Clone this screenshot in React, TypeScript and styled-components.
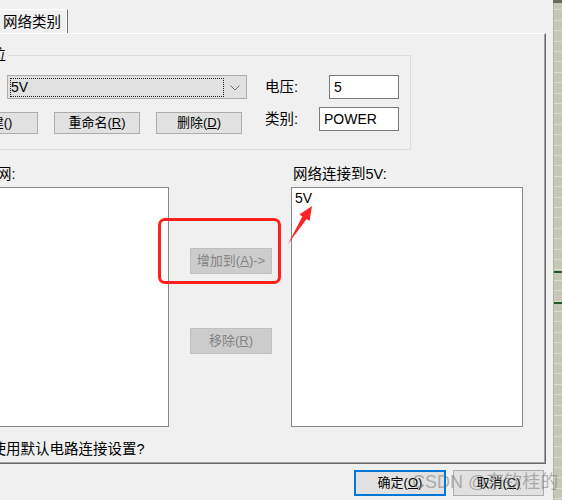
import styled, { createGlobalStyle } from 'styled-components';

const GlobalStyle = createGlobalStyle`
  html, body {
    margin: 0;
    padding: 0;
    background: #f0f0f0;
  }
  body {
    font-family: "Liberation Sans", "Noto Sans CJK SC", sans-serif;
    font-size: 14.5px;
    color: #000;
  }
`;

const Screen = styled.div`
  position: relative;
  display: flex;
  width: 562px;
  height: 500px;
  overflow: hidden;
  background: #f0f0f0;
`;

// the dialog sits partly off the left edge of the window
const DialogClip = styled.div`
  width: 553px;
  flex: none;
  overflow: hidden;
`;

const Dialog = styled.div`
  width: 653px;
  margin-left: -100px;
  display: flex;
  flex-direction: column;
`;

const TabStrip = styled.div`
  display: flex;
  height: 33px;
  box-sizing: border-box;
  padding: 9px 0 0 97px;
`;

const Tab = styled.div`
  box-sizing: border-box;
  height: 24px;
  padding: 4px 6px 0 5px;
  line-height: 16px;
  border-top: 1px solid #fff;
  border-left: 1px solid #fff;
  border-right: 1px solid #6d6d6d;
  box-shadow: inset -1px 0 0 #fff;
`;

const TabPage = styled.div`
  margin-left: 20px;
  width: 626px;
  box-sizing: border-box;
  border-top: 1px solid #fff;
  border-right: 1px solid #696969;
  border-bottom: 1px solid #696969;
  box-shadow: inset -1px -1px 0 #a0a0a0;
  padding: 13px 0 6px 19px;
`;

const GroupBox = styled.fieldset`
  width: 472px;
  box-sizing: border-box;
  margin: 0;
  border: 1px solid #dcdcdc;
  padding: 12px 11px 15px 12px;
  min-inline-size: 0;
`;

const GroupTitle = styled.legend`
  margin-left: 23px;
  padding: 0 2px;
  line-height: 16px;
`;

const GroupBody = styled.div`
  display: flex;
  align-items: flex-start;
  justify-content: space-between;
`;

const LeftCol = styled.div`
  width: 295px;
  display: flex;
  flex-direction: column;
`;

const Combo = styled.div`
  margin-left: 55px;
  width: 240px;
  height: 24px;
  box-sizing: border-box;
  border: 1px solid #adadad;
  background: #e1e1e1;
  display: flex;
  align-items: stretch;
  padding: 2px 0 1px 2px;
  font-size: 14px;
`;

const FocusRect = styled.div`
  width: 214px;
  box-sizing: border-box;
  border: 1px dotted #202020;
  line-height: 17px;
  padding-left: 0;
`;

const ComboArrow = styled.div`
  flex: 1;
  display: flex;
  align-items: center;
  justify-content: center;
`;

const ButtonRow = styled.div`
  margin-top: 13px;
  display: flex;
  gap: 16px;
`;

const PushButton = styled.button<{ $w: number; $h?: number; $default?: boolean }>`
  width: ${(p) => p.$w}px;
  height: ${(p) => p.$h ?? 22}px;
  box-sizing: border-box;
  flex: none;
  padding: 0;
  margin: 0;
  border: ${(p) => (p.$default ? '2px solid #0078d7' : '1px solid #adadad')};
  background: #e1e1e1;
  color: #000;
  font-family: inherit;
  font-size: 13px;
  line-height: 16px;
  white-space: nowrap;
  overflow: hidden;

  &:disabled {
    background: #cccccc;
    border-color: #bfbfbf;
    color: #838383;
  }

  u {
    text-underline-offset: 1px;
  }
`;

const RightCol = styled.div`
  width: 134px;
  display: grid;
  grid-template-columns: 1fr auto;
  row-gap: 8px;
  align-items: center;
`;

const FieldLabel = styled.span`
  line-height: 16px;
`;

const TextBox = styled.div<{ $w: number }>`
  justify-self: end;
  width: ${(p) => p.$w}px;
  height: 24px;
  box-sizing: border-box;
  border: 1px solid #7a7a7a;
  background: #fff;
  padding: 0 4px;
  font-size: 14px;
  line-height: 22px;
`;

const Lists = styled.div`
  margin-top: 16px;
  display: grid;
  grid-template-columns: 230px 122px 232px;
  grid-template-rows: auto 240px;
  row-gap: 5px;
`;

const ListLabel = styled.div<{ $indent?: number }>`
  line-height: 16px;
  padding-left: ${(p) => p.$indent ?? 0}px;
  white-space: nowrap;
`;

const ListBox = styled.div`
  box-sizing: border-box;
  border: 1px solid #828790;
  background: #fff;
  padding: 2px 3px;
  line-height: 16px;
  font-size: 14px;
`;

const MoveButtons = styled.div`
  display: flex;
  flex-direction: column;
  align-items: center;
  padding-left: 2px;
`;

const MoveButton = styled(PushButton)<{ $top: number }>`
  margin-top: ${(p) => p.$top}px;
`;

const DefaultsOption = styled.div`
  margin-top: 14px;
  padding-left: 52.5px;
  line-height: 16px;
  white-space: nowrap;
`;

const DialogButtons = styled.div`
  margin-top: 6px;
  display: flex;
  justify-content: flex-end;
  gap: 7px;
  padding-right: 9px;
`;

const Ruler = styled.div`
  flex: 1;
  border-top: 3px solid #6a6a60;
  background:
    linear-gradient(to bottom, transparent 268px, #1f5a23 268px, #1f5a23 270px, transparent 270px),
    linear-gradient(to bottom, transparent 299px, #1f5a23 299px, #1f5a23 301px, transparent 301px),
    repeating-linear-gradient(to bottom, #c6c7b7 0, #c6c7b7 6.4px, #dcddd2 6.4px, #dcddd2 7.4px, #c6c7b7 7.4px, #c6c7b7 10.4px);
  box-shadow: inset 1px 0 0 #b2b3a3;
`;

const Highlight = styled.div`
  position: absolute;
  left: 158px;
  top: 218px;
  width: 123px;
  height: 66px;
  box-sizing: border-box;
  border: 3px solid #ff1f1f;
  border-radius: 7px;
  pointer-events: none;
`;

const Pointer = styled.svg`
  position: absolute;
  left: 285px;
  top: 203px;
  pointer-events: none;
`;

const Watermark = styled.div`
  position: absolute;
  left: 412px;
  top: 471px;
  font-size: 18px;
  line-height: 22px;
  color: rgba(120, 120, 120, 0.55);
  white-space: nowrap;
  pointer-events: none;
`;

const Chevron = () => (
  <svg width="10" height="6" viewBox="0 0 10 6">
    <polyline points="0.5,0.5 5,5 9.5,0.5" fill="none" stroke="#6e6e6e" strokeWidth="1" />
  </svg>
);

export default function App() {
  return (
    <Screen>
      <GlobalStyle />
      <DialogClip>
        <Dialog>
          <TabStrip>
            <Tab>网络类别</Tab>
          </TabStrip>
          <TabPage>
            <GroupBox>
              <GroupTitle>单位</GroupTitle>
              <GroupBody>
                <LeftCol>
                  <Combo>
                    <FocusRect>5V</FocusRect>
                    <ComboArrow>
                      <Chevron />
                    </ComboArrow>
                  </Combo>
                  <ButtonRow>
                    <PushButton $w={86}>新建()</PushButton>
                    <PushButton $w={86}>
                      重命名(<u>R</u>)
                    </PushButton>
                    <PushButton $w={86}>
                      删除(<u>D</u>)
                    </PushButton>
                  </ButtonRow>
                </LeftCol>
                <RightCol>
                  <FieldLabel>电压:</FieldLabel>
                  <TextBox $w={70}>5</TextBox>
                  <FieldLabel>类别:</FieldLabel>
                  <TextBox $w={80}>POWER</TextBox>
                </RightCol>
              </GroupBody>
            </GroupBox>

            <Lists>
              <ListLabel>未分类的网:</ListLabel>
              <div />
              <ListLabel $indent={2}>网络连接到5V:</ListLabel>
              <ListBox />
              <MoveButtons>
                <MoveButton $w={82} $h={26} $top={61} disabled>
                  增加到(<u>A</u>)-&gt;
                </MoveButton>
                <MoveButton $w={82} $h={26} $top={54} disabled>
                  移除(<u>R</u>)
                </MoveButton>
              </MoveButtons>
              <ListBox>5V</ListBox>
            </Lists>

            <DefaultsOption>使用默认电路连接设置?</DefaultsOption>
          </TabPage>
          <DialogButtons>
            <PushButton $w={92} $h={26} $default>
              确定(<u>O</u>)
            </PushButton>
            <PushButton $w={91} $h={26}>
              取消(<u>C</u>)
            </PushButton>
          </DialogButtons>
        </Dialog>
      </DialogClip>
      <Ruler />

      <Highlight />
      <Pointer width="30" height="44" viewBox="0 0 30 44">
        <polygon points="3,41 17.4,13.5 14.4,11.6 27,3 24.6,18 21.6,16.1" fill="#ff2222" />
      </Pointer>
      <Watermark>CSDN @奈钦桂的</Watermark>
    </Screen>
  );
}
